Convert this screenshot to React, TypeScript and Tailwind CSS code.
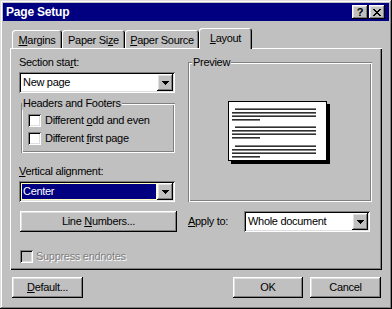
import React from "react";

const raised =
  "shadow-[inset_-1px_-1px_#000,inset_1px_1px_#fff,inset_-2px_-2px_#808080,inset_2px_2px_#dfdfdf]";
const sunken =
  "shadow-[inset_1px_1px_#808080,inset_-1px_-1px_#fff,inset_2px_2px_#000,inset_-2px_-2px_#dfdfdf]";
const etched =
  "shadow-[inset_1px_1px_#808080,inset_-1px_-1px_#fff,inset_2px_2px_#fff,inset_-2px_-2px_#808080]";

function Arrow() {
  return (
    <svg width="7" height="4" viewBox="0 0 7 4">
      <path d="M0 0h7v1H0zM1 1h5v1H1zM2 2h3v1H2zM3 3h1v1H3z" fill="#000" />
    </svg>
  );
}

function Dropdown({
  value,
  highlighted,
  className,
}: {
  value: string;
  highlighted?: boolean;
  className: string;
}) {
  return (
    <div className={`h-[21px] bg-white ${sunken} flex items-center p-[2px] ${className}`}>
      {highlighted ? (
        <div className="flex-1 h-[15px] mx-[1px] bg-[#000080] text-white flex items-center pl-[1px] outline-1 outline-dotted outline-[#ffff80] outline-offset-0">
          {value}
        </div>
      ) : (
        <div className="flex-1 pl-[2px]">{value}</div>
      )}
      <div className={`w-[16px] h-[17px] bg-[#c0c0c0] ${raised} flex items-center justify-center`}>
        <Arrow />
      </div>
    </div>
  );
}

function Checkbox({ disabled }: { disabled?: boolean }) {
  return (
    <div
      className={`w-[13px] h-[13px] shrink-0 ${sunken} ${disabled ? "bg-[#c0c0c0]" : "bg-white"}`}
    />
  );
}

function Button({ children, className }: { children: React.ReactNode; className: string }) {
  return (
    <div
      className={`h-[21px] bg-[#c0c0c0] ${raised} flex items-center justify-center ${className}`}
    >
      {children}
    </div>
  );
}

function U({ children }: { children: React.ReactNode }) {
  return <span className="underline underline-offset-[1px]">{children}</span>;
}

function PagePreview() {
  const paras = [8, 26, 45];
  const lines: React.ReactNode[] = [];
  paras.forEach((y0, i) => {
    const ys = [y0, y0 + 4, y0 + 7, y0 + 11];
    ys.forEach((y, j) => {
      const x1 = j === 0 ? 7 : 4;
      const x2 = j === 3 ? 32 : 88;
      lines.push(
        <g key={`${i}-${j}`}>
          <rect x={x1} y={y - 1} width={x2 - x1} height={1} fill={j % 2 === 0 ? "#808080" : "#303030"} />
          <rect x={x1} y={y} width={x2 - x1} height={1} fill={j % 2 === 0 ? "#303030" : "#808080"} />
        </g>
      );
    });
  });
  return (
    <svg width="103" height="64" viewBox="0 0 103 64">
      <rect x="3" y="3" width="99" height="60" fill="#000" />
      <rect x="0.5" y="0.5" width="98" height="59" fill="#fff" stroke="#000" />
      {lines}
    </svg>
  );
}

export default function App() {
  return (
    <div
      className="w-[392px] h-[309px] bg-[#c0c0c0] p-[3px] flex flex-col text-[11px] leading-[13px] tracking-[-0.3px] text-black shadow-[inset_-1px_-1px_#000,inset_1px_1px_#dfdfdf,inset_-2px_-2px_#808080,inset_2px_2px_#fff]"
      style={{ fontFamily: '"Liberation Sans", Arial, sans-serif' }}
    >
      {/* Title bar */}
      <div className="h-[18px] bg-[#000080] flex items-center justify-between pl-[3px] pr-[4px]">
        <span className="text-white font-bold text-[12px] leading-[14px] tracking-[-0.2px]">Page Setup</span>
        <div className="flex gap-[1px]">
          <div className={`w-[16px] h-[14px] bg-[#c0c0c0] ${raised} flex items-center justify-center font-bold text-[11px] leading-[11px]`}>
            ?
          </div>
          <div className={`w-[16px] h-[14px] bg-[#c0c0c0] ${raised} flex items-center justify-center`}>
            <svg width="8" height="7" viewBox="0 0 8 7">
              <path d="M0 0h2v1H0zM6 0h2v1H6zM1 1h2v1H1zM5 1h2v1H5zM2 2h4v1H2zM3 3h2v1H3zM2 4h4v1H2zM1 5h2v1H1zM5 5h2v1H5zM0 6h2v1H0zM6 6h2v1H6z" fill="#000" />
            </svg>
          </div>
        </div>
      </div>

      {/* Tabs */}
      <div className="mt-[7px] h-[20px] flex items-end pl-[9px]">
        <div className="w-[50px] h-[18px] rounded-t-[3px] shadow-[inset_1px_1px_#fff,inset_-1px_0_#000,inset_-2px_0_#808080] flex items-center justify-center pt-[2px]">
          <span><U>M</U>argins</span>
        </div>
        <div className="w-[63px] h-[18px] rounded-t-[3px] shadow-[inset_1px_1px_#fff,inset_-1px_0_#000,inset_-2px_0_#808080] flex items-center justify-center pt-[2px]">
          <span>Paper Si<U>z</U>e</span>
        </div>
        <div className="w-[74px] h-[18px] rounded-t-[3px] shadow-[inset_1px_1px_#fff,inset_-1px_0_#000,inset_-2px_0_#808080] flex items-center justify-center pt-[2px]">
          <span><U>P</U>aper Source</span>
        </div>
        <div className="relative z-10 w-[53px] h-[21px] mb-[-1px] bg-[#c0c0c0] rounded-t-[3px] shadow-[inset_1px_1px_#fff,inset_-1px_0_#000,inset_-2px_0_#808080] flex items-center justify-center">
          <span><U>L</U>ayout</span>
        </div>
      </div>

      {/* Panel */}
      <div className="mx-[7px] h-[222px] flex shadow-[inset_1px_1px_#fff,inset_-1px_-1px_#000,inset_-2px_-2px_#808080]">
        {/* Left column */}
        <div className="ml-[9px] w-[158px] flex flex-col">
          <div className="mt-[8px] h-[13px]">
            Section sta<U>r</U>t:
          </div>
          <Dropdown value="New page" className="mt-[3px] w-[156px]" />

          <div className={`relative mt-[10px] ml-[2px] w-[154px] h-[50px] ${etched} pt-[11px] pl-[7px] flex flex-col gap-[5px]`}>
            <span className="absolute -top-[6px] left-[1px] px-[1px] bg-[#c0c0c0]">Headers and Footers</span>
            <div className="flex items-center gap-[4px] h-[13px]">
              <Checkbox />
              <span>Different <U>o</U>dd and even</span>
            </div>
            <div className="flex items-center gap-[4px] h-[13px]">
              <Checkbox />
              <span>Different <U>f</U>irst page</span>
            </div>
          </div>

          <div className="mt-[12px] h-[13px]">
            <U>V</U>ertical alignment:
          </div>
          <Dropdown value="Center" highlighted className="mt-[3px] w-[156px]" />

          <Button className="mt-[9px] ml-[1px] w-[157px]">
            <span>Line <U>N</U>umbers...</span>
          </Button>

          <div className="mt-[18px] ml-[1px] flex items-center gap-[3px] h-[13px]">
            <Checkbox disabled />
            <span className="text-[#808080] [text-shadow:1px_1px_0_#fff]">Suppress endnotes</span>
          </div>
        </div>

        {/* Right column */}
        <div className="ml-[11px] w-[184px] flex flex-col">
          <div className={`relative mt-[14px] h-[140px] ${etched} flex items-center justify-center`}>
            <span className="absolute -top-[6px] left-[4px] px-[1px] bg-[#c0c0c0]">Preview</span>
            <div className="mr-[1px] mt-[1px]">
              <PagePreview />
            </div>
          </div>
          <div className="mt-[9px] flex items-center">
            <span className="w-[56px]"><U>A</U>pply to:</span>
            <Dropdown value="Whole document" className="w-[126px]" />
          </div>
        </div>
      </div>

      {/* Bottom buttons */}
      <div className="mt-[7px] flex items-center pl-[9px] pr-[8px]">
        <Button className="w-[71px]">
          <span><U>D</U>efault...</span>
        </Button>
        <Button className="ml-auto w-[70px]">OK</Button>
        <Button className="ml-[7px] w-[71px]">Cancel</Button>
      </div>
    </div>
  );
}
